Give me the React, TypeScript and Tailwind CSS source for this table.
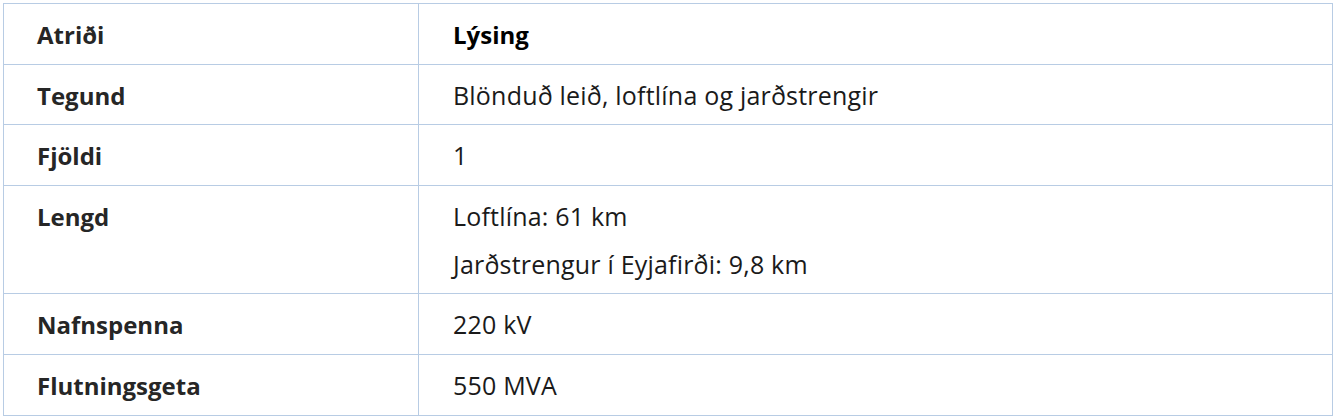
const rows: { label: string; lines: string[]; h: string }[] = [
  { label: 'Tegund', lines: ['Blönduð leið, loftlína og jarðstrengir'], h: 'h-[60px]' },
  { label: 'Fjöldi', lines: ['1'], h: 'h-[61px]' },
  { label: 'Lengd', lines: ['Loftlína: 61 km', 'Jarðstrengur í Eyjafirði: 9,8 km'], h: 'h-[108px]' },
  { label: 'Nafnspenna', lines: ['220 kV'], h: 'h-[61px]' },
  { label: 'Flutningsgeta', lines: ['550 MVA'], h: 'h-[61px]' },
];

export default function App() {
  return (
    <div className="h-[419px] w-[1336px] bg-white p-[3px] font-['Open_Sans','Liberation_Sans',sans-serif] leading-[48px] text-[#1a1a1a]">
      <div className="grid w-[1330px] grid-cols-[415px_1fr] border-l border-t border-[#b8cce4]">
        <div className="h-[61px] border-b border-r border-[#b8cce4] pl-[33px] pt-[7px] text-[24px] font-bold text-[#262626]">Atriði</div>
        <div className="h-[61px] border-b border-r border-[#b8cce4] pl-[34px] pt-[7px] text-[24px] font-bold text-black">Lýsing</div>
        {rows.map((row) => (
          <div key={row.label} className="contents">
            <div className={`${row.h} border-b border-r border-[#b8cce4] pl-[33px] pt-[7px] text-[24px] font-bold text-[#262626]`}>
              {row.label}
            </div>
            <div className={`${row.h} border-b border-r border-[#b8cce4] pl-[34px] pt-[6px] text-[25px] tracking-[0.2px]`}>
              {row.lines.map((line) => (
                <p key={line}>{line}</p>
              ))}
            </div>
          </div>
        ))}
      </div>
    </div>
  );
}
